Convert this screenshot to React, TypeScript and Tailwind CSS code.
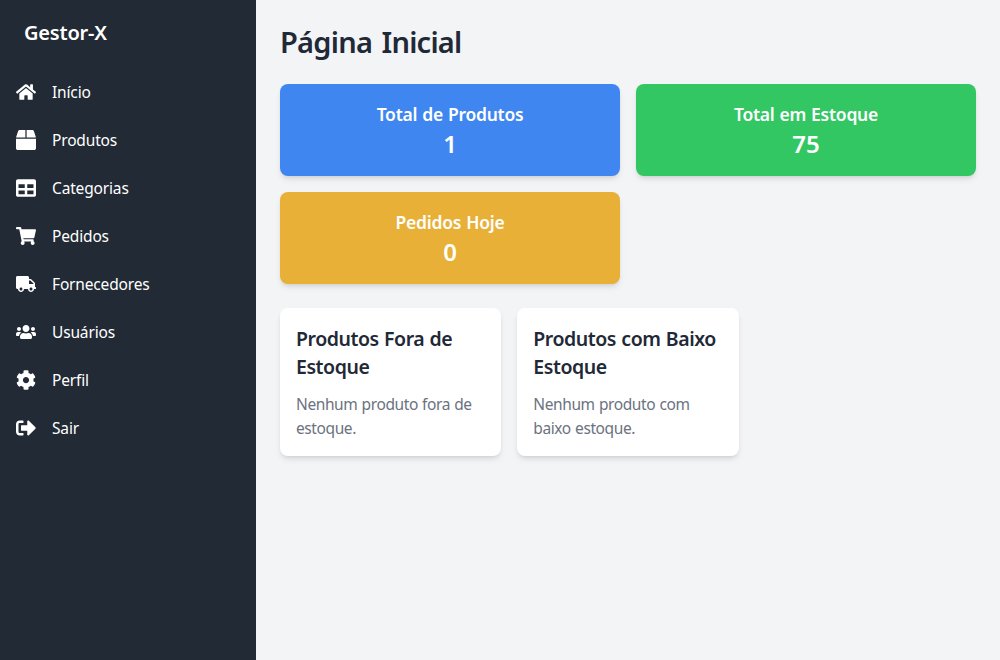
import { FaHome, FaBox, FaTable, FaShoppingCart, FaTruck, FaUsers, FaCog, FaSignOutAlt } from "react-icons/fa";
import type { IconType } from "react-icons";

const links: { label: string; Icon: IconType }[] = [
  { label: "Início", Icon: FaHome },
  { label: "Produtos", Icon: FaBox },
  { label: "Categorias", Icon: FaTable },
  { label: "Pedidos", Icon: FaShoppingCart },
  { label: "Fornecedores", Icon: FaTruck },
  { label: "Usuários", Icon: FaUsers },
  { label: "Perfil", Icon: FaCog },
  { label: "Sair", Icon: FaSignOutAlt },
];

const totals = [
  { title: "Total de Produtos", value: 1, color: "bg-[#3f86f1]" },
  { title: "Total em Estoque", value: 75, color: "bg-[#32c763]" },
  { title: "Pedidos Hoje", value: 0, color: "bg-[#e8b037]" },
];

const notices = [
  { title: "Produtos Fora de Estoque", text: "Nenhum produto fora de estoque." },
  { title: "Produtos com Baixo Estoque", text: "Nenhum produto com baixo estoque." },
];

export default function App() {
  return (
    <div className="flex h-screen bg-[#f3f4f6] font-['Noto_Sans',sans-serif] text-[#1f2937]">
      <aside className="w-64 shrink-0 bg-[#212a35] text-white">
        <div className="px-6 pt-[19px] pb-[21px] text-xl leading-7 font-semibold tracking-[-0.2px]">Gestor-X</div>
        <nav>
          {links.map(({ label, Icon }) => (
            <a key={label} href="#" className="flex h-12 items-center gap-4 px-4">
              <Icon className="size-5" />
              <span className="text-[15.5px] leading-6 tracking-[-0.16px]">{label}</span>
            </a>
          ))}
        </nav>
      </aside>
      <main className="flex-1 p-6">
        <h1 className="mb-6 text-[29px] leading-9 font-semibold tracking-[-0.75px] [word-spacing:2.5px]">Página Inicial</h1>
        <div className="mb-6 grid grid-cols-2 gap-4">
          {totals.map((t) => (
            <div key={t.title} className={`rounded-lg p-4 text-center text-white shadow-md ${t.color}`}>
              <h2 className="text-[17.5px] leading-7 font-semibold tracking-[-0.25px] [word-spacing:0.7px]">{t.title}</h2>
              <p className="text-2xl font-semibold">{t.value}</p>
            </div>
          ))}
        </div>
        <div className="grid grid-cols-3 gap-4">
          {notices.map((n) => (
            <section key={n.title} className="rounded-lg bg-white p-4 shadow-md">
              <h2 className="mb-[11px] pt-px text-[19.5px] leading-7 font-semibold tracking-[-0.45px] [word-spacing:0.7px]">{n.title}</h2>
              <p className="text-[15.5px] leading-6 tracking-[-0.4px] [word-spacing:0.6px] text-[#6b7280]">{n.text}</p>
            </section>
          ))}
        </div>
      </main>
    </div>
  );
}
